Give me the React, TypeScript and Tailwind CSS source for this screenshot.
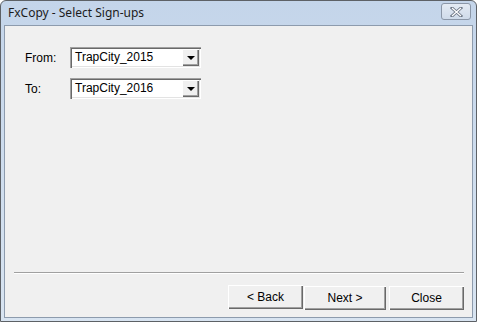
import type { ReactNode } from 'react'

const raised =
  'shadow-[inset_1px_1px_0_#ffffff,inset_-1px_-1px_0_#696969,inset_-2px_-2px_0_#a0a0a0]'

function Combo({ value }: { value: string }) {
  return (
    <div className="flex h-[21px] w-[131px] items-stretch bg-white shadow-[inset_1px_1px_0_#a0a0a0,inset_2px_2px_0_#696969,inset_-1px_-1px_0_#ffffff,inset_-2px_-2px_0_#e3e3e3] p-[2px]">
      <span className="flex-1 pl-[3px] text-[12px] leading-[17px] text-black">{value}</span>
      <span className={`flex w-[17px] items-center justify-center bg-[#f0f0f0] ${raised}`}>
        <span className="mt-[1px] h-0 w-0 border-x-[4px] border-t-[4px] border-x-transparent border-t-black" />
      </span>
    </div>
  )
}

function Btn({ children, w }: { children: ReactNode; w: string }) {
  return (
    <button
      className={`${w} h-[24px] bg-[#f0f0f0] text-[12px] text-black ${raised}`}
    >
      {children}
    </button>
  )
}

export default function App() {
  return (
    <div
      className="flex h-[322px] w-[477px] flex-col rounded-t-[6px] border border-[#5d6166] bg-gradient-to-b from-[#c4d5ea] to-[#d8e4f1] px-[3px] pb-[3px]"
      style={{ fontFamily: '"Liberation Sans", Arial, sans-serif' }}
    >
      <div className="flex h-[24px] items-center justify-between pl-[4px] pr-[2px]">
        <span
          className="text-[12px] text-[#1c1c1c]"
          style={{ fontFamily: '"Noto Sans", "Open Sans", sans-serif' }}
        >
          FxCopy - Select Sign-ups
        </span>
        <span className="mb-[3px] flex h-[17px] w-[30px] items-center justify-center rounded-[3px] border border-[#8b97a8] bg-gradient-to-b from-[#e4ebf4] to-[#cfdbea]">
          <svg width="13" height="10" viewBox="0 0 13 10">
            <path
              d="M2 1 L11 9 M11 1 L2 9"
              stroke="#6d7786"
              strokeWidth="3"
              strokeLinecap="square"
            />
            <path d="M2 1 L11 9 M11 1 L2 9" stroke="#ffffff" strokeWidth="1.3" />
          </svg>
        </span>
      </div>

      <div className="flex flex-1 flex-col border border-[#8d9bad] bg-[#f0f0f0]">
        <div className="flex flex-col gap-[10px] pl-[20px] pt-[21px] text-[12px] text-black">
          <div className="flex items-center">
            <span className="w-[45px]">From:</span>
            <Combo value="TrapCity_2015" />
          </div>
          <div className="flex items-center">
            <span className="w-[45px]">To:</span>
            <Combo value="TrapCity_2016" />
          </div>
        </div>

        <div className="flex-1" />

        <div className="ml-[9px] mr-[8px] h-[2px] border-t border-b border-t-[#a0a0a0] border-b-white" />

        <div className="flex justify-end pb-[7px] pr-[8px] pt-[11px]">
          <Btn w="w-[75px]">&lt; Back</Btn>
          <div className="ml-[1px]">
            <Btn w="w-[82px]">Next &gt;</Btn>
          </div>
          <div className="ml-[3px]">
            <Btn w="w-[75px]">Close</Btn>
          </div>
        </div>
      </div>
    </div>
  )
}
